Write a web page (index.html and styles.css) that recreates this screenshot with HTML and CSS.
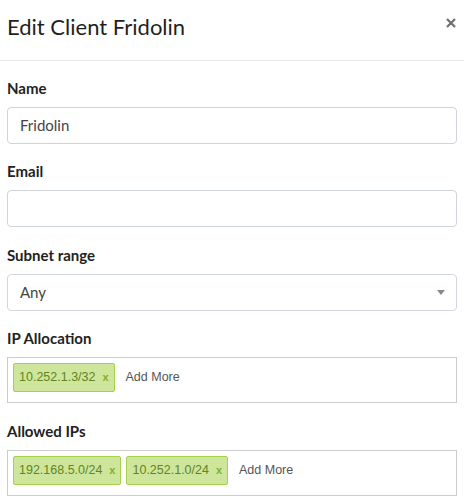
FILE: index.html
```html
<!DOCTYPE html>
<html lang="en">
<head>
<meta charset="utf-8">
<title>Edit Client Fridolin</title>
<link rel="stylesheet" href="styles.css">
</head>
<body>
<div class="modal">
  <div class="modal-header">
    <h4 class="modal-title">Edit Client Fridolin</h4>
    <button class="close" type="button" aria-label="Close">
      <svg width="10" height="10" viewBox="0 0 10 10"><path d="M1 1L9 9M9 1L1 9" stroke="#6f6f6f" stroke-width="2.2" stroke-linecap="butt"/></svg>
    </button>
  </div>
  <div class="modal-body">
    <div class="form-group">
      <label class="label">Name</label>
      <div class="input">Fridolin</div>
    </div>
    <div class="form-group">
      <label class="label">Email</label>
      <div class="input"></div>
    </div>
    <div class="form-group">
      <label class="label">Subnet range</label>
      <div class="input select">
        <span>Any</span>
        <span class="arrow"></span>
      </div>
    </div>
    <div class="form-group">
      <label class="label">IP Allocation</label>
      <div class="tagsinput">
        <span class="tag"><span>10.252.1.3/32&nbsp;&nbsp;</span><a class="rm">x</a></span>
        <span class="add">Add More</span>
      </div>
    </div>
    <div class="form-group">
      <label class="label">Allowed IPs</label>
      <div class="tagsinput">
        <span class="tag"><span>192.168.5.0/24&nbsp;&nbsp;</span><a class="rm">x</a></span>
        <span class="tag"><span>10.252.1.0/24&nbsp;&nbsp;</span><a class="rm">x</a></span>
        <span class="add">Add More</span>
      </div>
    </div>
  </div>
</div>
</body>
</html>
```
FILE: styles.css
```css
html, body {
  margin: 0;
  padding: 0;
  background: #fff;
}
body {
  font-family: Lato, "Noto Sans", sans-serif;
  color: #212529;
}
.modal {
  width: 464px;
}
.modal-header {
  display: flex;
  justify-content: space-between;
  align-items: flex-start;
  padding: 12px 8px 18px 7px;
  border-bottom: 1px solid #e6e6e6;
}
.modal-title {
  margin: 0;
  font-size: 22px;
  line-height: 30px;
  font-weight: 400;
  color: #1f1f1f;
}
.close {
  border: 0;
  background: transparent;
  padding: 0;
  margin-top: 6px;
  width: 10px;
  height: 10px;
  display: flex;
}
.modal-body {
  padding: 15px 7px 0 7px;
}
.form-group {
  margin-bottom: 15.3px;
}
.label {
  display: block;
  font-size: 15px;
  line-height: 24px;
  font-weight: 700;
  color: #222;
  margin-bottom: 7px;
}
.input {
  box-sizing: border-box;
  height: 37px;
  border: 1px solid #ced4da;
  border-radius: 4px;
  padding: 0 12px;
  font-size: 15px;
  line-height: 35px;
  color: #444;
}
.select {
  display: flex;
  justify-content: space-between;
  align-items: center;
  border-color: #d2d6de;
}
.arrow {
  width: 0;
  height: 0;
  border-left: 4px solid transparent;
  border-right: 4px solid transparent;
  border-top: 5px solid #888;
  margin-right: -1px;
}
.tagsinput {
  border: 1px solid #ccc;
  padding: 5px;
  display: flex;
  flex-wrap: wrap;
  align-items: flex-start;
  font-family: "Liberation Sans", Arial, sans-serif;
}
.tag {
  display: block;
  border: 1px solid #a5d24a;
  border-radius: 2px;
  padding: 5px;
  background: #cde69c;
  color: #638421;
  font-size: 12.5px;
  line-height: 17.5px;
  margin-right: 5px;
  margin-bottom: 5px;
}
.rm {
  font-weight: 700;
  color: #82ad2b;
  font-size: 11px;
}
.add {
  display: block;
  border: 1px solid transparent;
  padding: 5px;
  font-size: 12.5px;
  line-height: 17.5px;
  color: #555;
  margin-bottom: 5px;
}
```
